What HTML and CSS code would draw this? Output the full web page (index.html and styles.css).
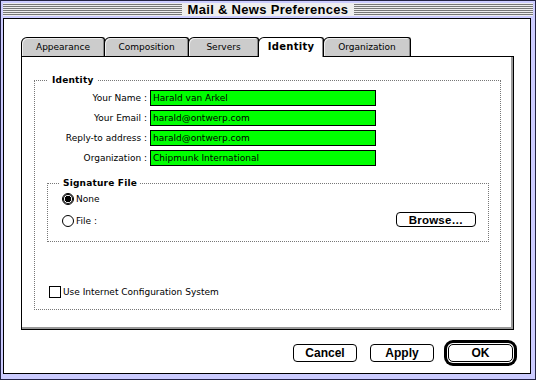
FILE: index.html
```html
<!DOCTYPE html>
<html lang="en">
<head>
    <meta charset="UTF-8">
    <meta name="viewport" content="width=device-width, initial-scale=1.0">
    <title>Mail &amp; News Preferences</title>
    <link rel="stylesheet" href="styles.css">
</head>
<body>
<!--Window-->
<div class="window">
    <div class="titlebar">
        <span class="stripes"></span>
        <span class="title">Mail &amp; News Preferences</span>
        <span class="stripes"></span>
    </div>
    <div class="content">
        <!--Tabs-->
        <div class="tabs">
            <span class="tab tabAppearance">Appearance</span>
            <span class="tab tabComposition">Composition</span>
            <span class="tab tabServers">Servers</span>
            <span class="tab tabIdentity active">Identity</span>
            <span class="tab tabOrganization">Organization</span>
        </div>
        <!--Identity panel-->
        <div class="panel">
            <fieldset class="group identity">
                <legend>Identity</legend>
                <div class="fields">
                    <label>Your Name :</label>
                    <div class="field">Harald van Arkel</div>
                    <label>Your Email :</label>
                    <div class="field">harald@ontwerp.com</div>
                    <label>Reply-to address :</label>
                    <div class="field">harald@ontwerp.com</div>
                    <label>Organization :</label>
                    <div class="field">Chipmunk International</div>
                </div>
                <fieldset class="group signature">
                    <legend>Signature File</legend>
                    <div class="radioRow">
                        <span class="radio checked"></span>
                        <span>None</span>
                    </div>
                    <div class="radioRow fileRow">
                        <span class="radio"></span>
                        <span>File :</span>
                        <span class="btn browse">Browse…</span>
                    </div>
                </fieldset>
                <div class="checkRow">
                    <span class="checkbox"></span>
                    <span>Use Internet Configuration System</span>
                </div>
            </fieldset>
        </div>
        <!--Buttons-->
        <div class="buttons">
            <span class="btn btnCancel">Cancel</span>
            <span class="btn btnApply">Apply</span>
            <span class="btn btnOk">OK</span>
        </div>
    </div>
</div>
</body>
</html>
```

FILE: styles.css
```css
body {
    margin: 0;
    font-family: "DejaVu Sans", sans-serif;
    font-size: 9px;
    color: #000;
}
.window {
    box-sizing: border-box;
    width: 536px;
    height: 380px;
    border: 1px solid #222244;
    background: #ccccff;
    padding: 0 4px 5px 2px;
    display: flex;
    flex-direction: column;
}
.titlebar {
    height: 13px;
    margin: 2px -2px 2px 0;
    background: #eeeeee;
    display: flex;
    align-items: center;
}
.stripes {
    flex: 1;
    height: 11px;
    background: repeating-linear-gradient(to bottom, #777777 0 1px, #eeeeee 1px 2px);
}
.title {
    padding: 0 6px;
    font-family: "Liberation Sans", Arial, sans-serif;
    font-weight: bold;
    font-size: 13px;
    letter-spacing: 0.3px;
    line-height: 13px;
}
.content {
    flex: 1;
    background: #fff;
    border: 1px solid #000;
    padding: 18px 17px 0 17px;
    display: flex;
    flex-direction: column;
}
/*tabs*/
.tabs {
    display: flex;
    align-items: flex-end;
    height: 19px;
}
.tab {
    box-sizing: border-box;
    height: 19px;
    border: 1px solid #000;
    border-bottom: 0;
    border-radius: 6px 3px 0 0;
    background: #cccccc;
    box-shadow: inset -1px 0 0 #888888, inset 1px 1px 0 #eeeeee;
    display: flex;
    align-items: center;
    justify-content: center;
    margin-left: -1px;
    line-height: 12px;
}
.tabAppearance { width: 84px; margin-left: 0; }
.tabComposition { width: 85px; }
.tabServers { width: 71px; }
.tabIdentity { width: 66px; }
.tabOrganization { width: 88px; }
.tab.active {
    height: 20px;
    margin-bottom: -1px;
    background: #fff;
    position: relative;
    z-index: 1;
    box-shadow: inset -1px 0 0 #888888;
    font-weight: bold;
    font-size: 10px;
    letter-spacing: 0.3px;
    padding-bottom: 1px;
}
.panel {
    width: 493px;
    box-sizing: border-box;
    border: 1px solid #000;
    box-shadow: inset -2px -2px 0 #999999;
    padding: 17px 12px 19px 12px;
}
/*groups*/
.group {
    margin: 0;
    padding: 0;
    border: 1px dotted #777777;
    min-width: 0;
}
.group legend {
    font-weight: bold;
    font-size: 9px;
    letter-spacing: 0.2px;
    line-height: 13px;
    padding: 0 4px;
}
.identity {
    padding: 3px 0 11px 0;
}
.identity legend {
    margin-left: 13px;
}
.fields {
    display: grid;
    grid-template-columns: 112px 226px;
    grid-auto-rows: 16px;
    column-gap: 3px;
    row-gap: 4px;
}
.fields label {
    text-align: right;
    line-height: 16px;
    white-space: nowrap;
}
.field {
    box-sizing: border-box;
    background: #00ff00;
    border: 1px solid #000;
    padding-left: 2px;
    line-height: 14px;
}
.signature {
    margin: 11px 11px 0 12px;
    padding: 3px 12px 14px 14px;
}
.signature legend {
    margin-left: -2px;
    padding: 0 3px;
}
.radioRow {
    display: flex;
    align-items: center;
    gap: 2px;
    height: 12px;
    line-height: 12px;
}
.fileRow {
    margin-top: 7px;
    height: 15px;
    align-items: flex-end;
}
.radio {
    box-sizing: border-box;
    width: 12px;
    height: 12px;
    border: 1px solid #000;
    border-radius: 50%;
    background: #fff;
}
.radio.checked {
    background: radial-gradient(circle, #000 0 3px, #fff 3.5px);
    box-shadow: inset 0 0 0 1px #000;
}
.checkRow {
    display: flex;
    align-items: center;
    gap: 2px;
    margin: 44px 0 0 14px;
    height: 12px;
}
.checkbox {
    box-sizing: border-box;
    width: 12px;
    height: 12px;
    border: 1px solid #000;
    background: #fff;
}
/*buttons*/
.btn {
    box-sizing: border-box;
    display: flex;
    align-items: center;
    justify-content: center;
    height: 18px;
    border: 1px solid #000;
    border-radius: 4px;
    background: #fff;
    font-family: "Liberation Sans", Arial, sans-serif;
    font-weight: bold;
    font-size: 12px;
}
.browse {
    width: 80px;
    height: 15px;
    margin-left: auto;
    font-size: 11.5px;
    letter-spacing: 0.2px;
}
.buttons {
    display: flex;
    justify-content: flex-end;
    margin-top: 14px;
}
.btnCancel { width: 64px; }
.btnApply { width: 64px; margin-left: 13px; }
.btnOk {
    width: 65px;
    margin-left: 14px;
    border-radius: 5px;
    box-shadow: 0 0 0 1px #fff, 0 0 0 4px #000;
}
```
